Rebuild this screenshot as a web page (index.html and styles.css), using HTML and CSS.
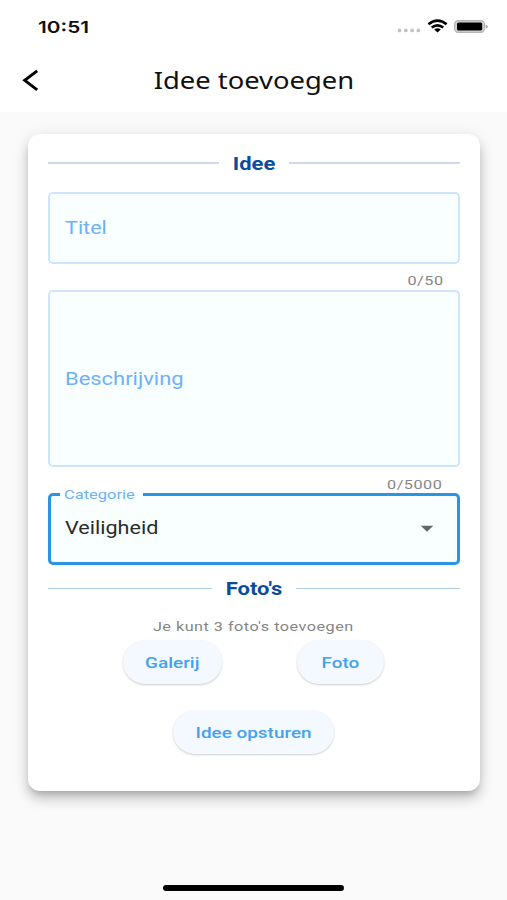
FILE: index.html
```html
<!DOCTYPE html>
<html lang="nl">
<head>
<meta charset="utf-8">
<title>Idee toevoegen</title>
<link rel="stylesheet" href="styles.css">
</head>
<body>
<div class="screen">
  <header class="top">
    <div class="status">
      <span class="wide clock">10:51</span>
      <svg class="status-icons" width="92" height="18" viewBox="0 0 92 18">
        <g fill="#c2c2c2"><circle cx="3.5" cy="12.4" r="1.9"/><circle cx="9.8" cy="12.4" r="1.9"/><circle cx="16.1" cy="12.4" r="1.9"/><circle cx="22.4" cy="12.4" r="1.9"/></g>
        <g fill="none" stroke="#000" stroke-width="2.5"><path d="M32.4 6.2Q41.5-1 50.6 6.2"/><path d="M35.7 9.6Q41.5 5.1 47.3 9.6"/></g>
        <path d="M38.2 11.5Q41.5 8.9 44.8 11.5L41.5 14.4Z"/>
        <rect x="58.6" y="2.6" width="29.8" height="11.8" rx="3.6" fill="#d4d4d4" stroke="#b5b5b5" stroke-width="1.2"/>
        <rect x="61" y="4.4" width="25.2" height="8.2" rx="1.6"/>
        <path d="M89.6 6.5Q91.8 7 91.8 8.6T89.6 10.7Z" fill="#a8a8a8"/>
      </svg>
    </div>
    <div class="bar">
      <svg class="back" width="18" height="24" viewBox="0 0 18 24"><path d="M15.2 2.8 2.7 12.3 15.2 21.8" fill="none" stroke="#000" stroke-width="2.9"/></svg>
      <h1><span class="wide">Idee toevoegen</span></h1>
    </div>
  </header>
  <main class="card">
    <h2 class="divider idea"><span class="wide">Idee</span></h2>
    <div class="field title"><span class="wide label">Titel</span></div>
    <div class="counter"><span class="wide">0/50</span></div>
    <div class="field description"><span class="wide label">Beschrijving</span></div>
    <div class="counter long"><span class="wide">0/5000</span></div>
    <div class="field category">
      <span class="legend"><span class="wide">Categorie</span></span>
      <span class="wide value">Veiligheid</span>
      <svg class="caret" width="14" height="8" viewBox="0 0 14 8"><path d="M.7.7H13.3L7 6.7Z" fill="#616867"/></svg>
    </div>
    <h2 class="divider photos"><span class="wide">Foto's</span></h2>
    <p class="hint"><span class="wide">Je kunt 3 foto's toevoegen</span></p>
    <div class="actions">
      <button class="gallery"><span class="wide">Galerij</span></button>
      <button class="photo"><span class="wide">Foto</span></button>
    </div>
    <button class="submit"><span class="wide">Idee opsturen</span></button>
  </main>
  <div class="home"></div>
</div>
</body>
</html>
```
FILE: styles.css
```css
* { box-sizing: border-box; }
body { margin: 0; font-family: Roboto, sans-serif; }
.screen { width: 507px; height: 900px; background: #fafafa; display: flex; flex-direction: column; overflow: hidden; }
.wide { display: inline-block; transform: scaleX(1.22); white-space: nowrap; }
.top { height: 112px; background: #fff; flex: none; }
.status { height: 48px; display: flex; justify-content: space-between; padding: 18px 19px 0 38px; }
.clock { font: 600 16.5px/18px Inter, sans-serif; transform: scaleX(1.26); transform-origin: left; color: #111; }
.status-icons { display: block; }
.bar { height: 64px; display: grid; grid-template-columns: 40px 1fr 40px; align-items: center; padding: 0 20px; }
.back { margin-left: 2px; }
h1 { margin: 0; text-align: center; font: 400 24px/32px "Noto Sans", sans-serif; color: #111; }
h1 .wide { transform: scaleX(1.14); }
.card { width: 452px; height: 657px; margin: 22px auto 0; padding: 18px 20px 0; background: #fff; border-radius: 12px; box-shadow: 0 5px 6px -3px rgba(0,0,0,.2), 0 9px 12px 1px rgba(0,0,0,.12), 0 3px 16px rgba(0,0,0,.12); flex: none; }
.divider { margin: 0; height: 24px; display: grid; align-items: center; text-align: center; font-size: 18px; line-height: 22px; font-weight: 700; color: #094c9c; }
.divider::before, .divider::after { content: ""; height: 2px; background: #cbdbec; margin-top: -2px; }
.divider .wide { margin-top: -1px; }
.idea { grid-template-columns: 171px 1fr 171px; }
.photos { grid-template-columns: 164px 1fr 164px; margin-top: 12px; }
.photos::before, .photos::after { height: 1px; background: #b1cde5; }
.field { position: relative; width: 412px; display: flex; align-items: center; padding: 0 15px; background: #f9ffff; border: 2px solid #cde5ff; border-radius: 5px; }
.title { height: 72px; margin-top: 16px; }
.description { height: 177px; }
.description .label { transform: scaleX(1.24); }
.category { height: 72px; border: 3px solid #2b95e3; padding: 0 23px 0 14px; justify-content: space-between; }
.label, .value { font-size: 17.7px; transform-origin: left; }
.label { color: #6eb1f9; }
.value { color: #292b2b; margin-top: -3px; }
.caret { margin-top: -1px; }
.counter { height: 26px; padding: 8px 16px 0 0; text-align: right; font-size: 13.3px; line-height: 18px; letter-spacing: .4px; color: #858585; }
.counter .wide { transform-origin: right; }
.long { padding-top: 9px; padding-right: 17px; }
.legend { position: absolute; left: 9px; top: -11px; width: 83px; height: 20px; padding: 1px 0 0 4px; font-size: 13.3px; line-height: 18px; color: #6eb1f9; background: linear-gradient(#fff 9px, #f9ffff 9px); }
.legend .wide { transform: scaleX(1.24); transform-origin: left; }
.hint { margin: 16px 0 0; height: 20px; text-align: center; font-size: 13.3px; line-height: 20px; letter-spacing: .4px; color: #858585; }
.actions { display: flex; gap: 75px; padding-left: 75px; margin-top: 3px; }
button { height: 44px; padding: 1px 0 0; border: 0; border-radius: 22px; background: #f3f9ff; color: #44a1ee; font: 500 15.5px/20px Roboto, sans-serif; box-shadow: 0 1px 2px rgba(0,0,0,.2); }
.gallery { width: 99px; }
.photo { width: 87px; }
.submit { display: block; width: 161px; margin: 26px auto 0; }
.home { width: 181px; height: 6px; margin: 94px auto 0; background: #000; border-radius: 3px; flex: none; }
```
